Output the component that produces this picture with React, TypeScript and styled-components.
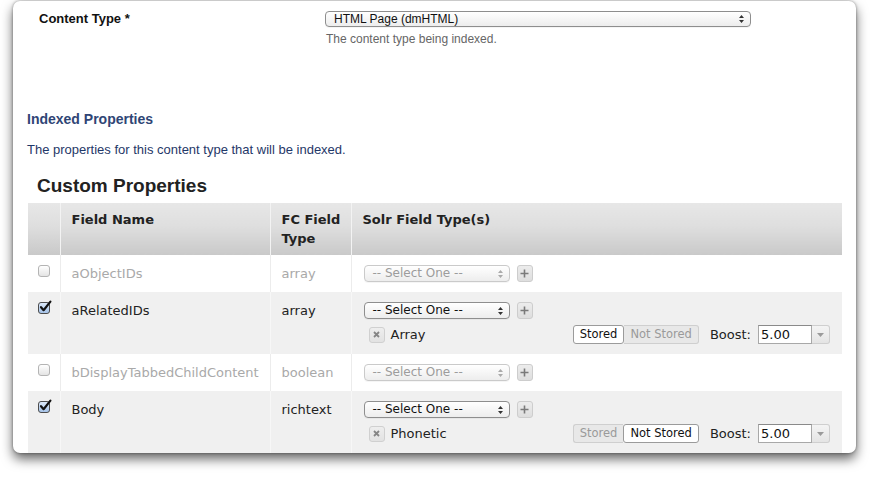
import React from "react";
import styled, { createGlobalStyle } from "styled-components";

const Global = createGlobalStyle`
  html, body { margin: 0; padding: 0; background: #fff; }
  body {
    width: 870px; height: 477px; overflow: hidden;
    font-family: "Liberation Sans", Arial, sans-serif;
  }
`;

const Window = styled.div`
  margin: 1px 0 0 13px;
  width: 843px;
  height: 452px;
  box-sizing: border-box;
  border-radius: 7px;
  background: #fff;
  overflow: hidden;
  box-shadow: 0 6px 12px rgba(0, 0, 0, 0.6), 0 0 3px rgba(0, 0, 0, 0.4);
  padding: 10px 0 0 14px;
`;

const FieldRow = styled.div`
  display: grid;
  grid-template-columns: 298px 426px;
`;

const FieldLabel = styled.div`
  padding-left: 12px;
  font: bold 13px/16px "Liberation Sans", Arial, sans-serif;
  color: #111;
`;

const FieldControl = styled.div`
  display: flex;
  flex-direction: column;
  gap: 4px;
`;

const Help = styled.div`
  font: 12px/16px "Liberation Sans", Arial, sans-serif;
  color: #666;
  padding-left: 1px;
`;

const SectionTitle = styled.h3`
  margin: 64px 0 0;
  font: bold 14px/16px "Liberation Sans", Arial, sans-serif;
  color: #2f4575;
`;

const SectionText = styled.p`
  margin: 15px 0 0;
  font: 13px/16px "Liberation Sans", Arial, sans-serif;
  color: #1f3868;
`;

const TableTitle = styled.h2`
  margin: 17px 0 0;
  padding-left: 10px;
  font: bold 19px/22px "Liberation Sans", Arial, sans-serif;
  color: #222;
`;

const Table = styled.table`
  margin: 6px 0 0 1px;
  width: 814px;
  table-layout: fixed;
  border-collapse: collapse;
  font-family: "DejaVu Sans", Verdana, sans-serif;
`;

const HeadCell = styled.th<{ $w: number; $first?: boolean }>`
  width: ${(p) => p.$w}px;
  box-sizing: border-box;
  padding: 7px 11px 7px;
  text-align: left;
  vertical-align: top;
  white-space: nowrap;
  font: bold 13px/19px "DejaVu Sans", Verdana, sans-serif;
  color: #222;
  background: linear-gradient(#e7e7e7, #dedede 45%, #c9c9c9);
  border-left: ${(p) => (p.$first ? "none" : "1px solid #f3f3f3")};
`;

const Row = styled.tr<{ $alt?: boolean }>`
  background: ${(p) => (p.$alt ? "#f0f0f0" : "#fff")};
`;

const Cell = styled.td<{ $first?: boolean; $muted?: boolean; $alt?: boolean }>`
  padding: ${(p) => (p.$first ? "10px 10px" : "10px 11px")};
  vertical-align: top;
  font-size: 13px;
  line-height: 17px;
  color: ${(p) => (p.$muted ? "#a9a9a9" : "#222")};
  border-left: ${(p) =>
    p.$first ? "none" : p.$alt ? "1px solid #f7f7f7" : "1px solid #ececec"};
  white-space: nowrap;
`;

const SolrCell = styled(Cell)`
  padding: 10px 12px;
`;

const Check = styled.span<{ $on?: boolean }>`
  position: relative;
  display: block;
  width: 12px;
  height: 12px;
  box-sizing: border-box;
  border-radius: 3px;
  border: 1px solid ${(p) => (p.$on ? "#4d4d4d" : "#b4b4b4")};
  background: ${(p) =>
    p.$on
      ? "linear-gradient(#dbe8f8, #a6c3e8)"
      : "linear-gradient(#ffffff, #e4e4e4)"};
`;

const CheckMark = styled.svg`
  position: absolute;
  left: 0px;
  top: -3px;
`;

const Checkbox = ({ on }: { on?: boolean }) => (
  <Check $on={on}>
    {on && (
      <CheckMark width="13" height="13" viewBox="0 0 13 13">
        <path
          d="M2 7.2 L4.6 10.2 L11.4 1.6"
          fill="none"
          stroke="#111"
          strokeWidth="2.2"
          strokeLinecap="round"
          strokeLinejoin="round"
        />
      </CheckMark>
    )}
  </Check>
);

const SelectBox = styled.div<{ $disabled?: boolean; $w: number; $h: number; $small?: boolean }>`
  display: inline-flex;
  align-items: center;
  justify-content: space-between;
  box-sizing: border-box;
  width: ${(p) => p.$w}px;
  height: ${(p) => p.$h}px;
  border: 1px solid ${(p) => (p.$disabled ? "#cacaca" : "#8e8e8e")};
  border-radius: 4px;
  background: linear-gradient(#ffffff, #ededed);
  color: ${(p) => (p.$disabled ? "#9c9c9c" : "#111")};
  padding: 0 6px 0 8px;
  font: ${(p) =>
    p.$small
      ? '12px/14px "Liberation Sans", Arial, sans-serif'
      : '12px/15px "DejaVu Sans", Verdana, sans-serif'};
  box-shadow: 0 1px 0 rgba(0, 0, 0, 0.04);
`;

const Arrows = ({ color }: { color: string }) => (
  <svg width="5" height="8" viewBox="0 0 5 8">
    <path d="M2.5 0 L5 3 L0 3 Z M0 5 L5 5 L2.5 8 Z" fill={color} />
  </svg>
);

const Select = ({
  label,
  w,
  h,
  disabled,
  small,
}: {
  label: string;
  w: number;
  h: number;
  disabled?: boolean;
  small?: boolean;
}) => (
  <SelectBox $w={w} $h={h} $disabled={disabled} $small={small}>
    <span>{label}</span>
    <Arrows color={disabled ? "#aaa" : "#333"} />
  </SelectBox>
);

const Line = styled.div`
  display: flex;
  align-items: center;
`;

const TagLine = styled(Line)`
  margin-top: 6px;
  height: 19px;
`;

const PlusButton = styled.span`
  display: inline-flex;
  align-items: center;
  justify-content: center;
  margin-left: 7px;
  width: 16px;
  height: 17px;
  box-sizing: border-box;
  border: 1px solid #cdcdcd;
  border-radius: 3px;
  background: linear-gradient(#ececec, #dedede);
`;

const Tag = styled.span`
  display: inline-flex;
  align-items: center;
  gap: 6px;
  margin-left: 5px;
  font-size: 13px;
  color: #222;
`;

const RemoveButton = styled.span`
  display: inline-flex;
  align-items: center;
  justify-content: center;
  width: 16px;
  height: 16px;
  box-sizing: border-box;
  border: 1px solid #d0d0d0;
  border-radius: 3px;
  background: linear-gradient(#eeeeee, #e2e2e2);
`;

const Options = styled.div`
  margin-left: auto;
  display: flex;
  align-items: center;
`;

const Toggle = styled.div`
  display: inline-flex;
  height: 19px;
  margin-right: 11px;
`;

const Seg = styled.span<{ $on?: boolean; $pos: "l" | "r" }>`
  box-sizing: border-box;
  height: 19px;
  padding: 0 6px;
  font: 11.5px/17px "DejaVu Sans", Verdana, sans-serif;
  color: ${(p) => (p.$on ? "#111" : "#9a9a9a")};
  background: ${(p) => (p.$on ? "#fff" : "#e8e8e8")};
  border: 1px solid ${(p) => (p.$on ? "#9b9b9b" : "#cfcfcf")};
  ${(p) =>
    p.$on
      ? "border-radius: 3px;"
      : p.$pos === "l"
      ? "border-radius: 3px 0 0 3px; border-right: none;"
      : "border-radius: 0 3px 3px 0; border-left: none;"}
`;

const BoostLabel = styled.span`
  font-size: 13px;
  color: #222;
  margin-right: 7px;
`;

const BoostInput = styled.span`
  box-sizing: border-box;
  width: 54px;
  height: 19px;
  padding-left: 2px;
  border: 1px solid #a8a8a8;
  border-top-color: #8a8a8a;
  background: #fff;
  font: 13px/17px "DejaVu Sans", Verdana, sans-serif;
  color: #111;
`;

const BoostButton = styled.span`
  display: inline-flex;
  align-items: center;
  justify-content: center;
  box-sizing: border-box;
  width: 18px;
  height: 19px;
  border: 1px solid #cfcfcf;
  border-left: none;
  border-radius: 0 3px 3px 0;
  background: linear-gradient(#f4f4f4, #e4e4e4);
`;

type Prop = {
  name: string;
  type: string;
  on: boolean;
  tag?: string;
  stored?: boolean;
};

const props: Prop[] = [
  { name: "aObjectIDs", type: "array", on: false },
  { name: "aRelatedIDs", type: "array", on: true, tag: "Array", stored: true },
  { name: "bDisplayTabbedChildContent", type: "boolean", on: false },
  { name: "Body", type: "richtext", on: true, tag: "Phonetic", stored: false },
];

export default function App() {
  return (
    <>
      <Global />
      <Window>
        <FieldRow>
          <FieldLabel>Content Type *</FieldLabel>
          <FieldControl>
            <Select label="HTML Page (dmHTML)" w={426} h={16} small />
            <Help>The content type being indexed.</Help>
          </FieldControl>
        </FieldRow>

        <SectionTitle>Indexed Properties</SectionTitle>
        <SectionText>The properties for this content type that will be indexed.</SectionText>

        <TableTitle>Custom Properties</TableTitle>
        <Table>
          <thead>
            <tr>
              <HeadCell $w={32} $first />
              <HeadCell $w={210}>Field Name</HeadCell>
              <HeadCell $w={81}>
                FC Field
                <br />
                Type
              </HeadCell>
              <HeadCell $w={491}>Solr Field Type(s)</HeadCell>
            </tr>
          </thead>
          <tbody>
            {props.map((p, i) => {
              const alt = i % 2 === 1;
              return (
                <Row key={p.name} $alt={alt}>
                  <Cell $first $alt={alt}>
                    <Checkbox on={p.on} />
                  </Cell>
                  <Cell $muted={!p.on} $alt={alt}>
                    {p.name}
                  </Cell>
                  <Cell $muted={!p.on} $alt={alt}>
                    {p.type}
                  </Cell>
                  <SolrCell $alt={alt}>
                    <Line>
                      <Select label="-- Select One --" w={146} h={17} disabled={!p.on} />
                      <PlusButton>
                        <svg width="9" height="9" viewBox="0 0 9 9">
                          <path d="M4.5 0.5 V8.5 M0.5 4.5 H8.5" stroke="#7a7a7a" strokeWidth="1.6" />
                        </svg>
                      </PlusButton>
                    </Line>
                    {p.tag && (
                      <TagLine>
                        <Tag>
                          <RemoveButton>
                            <svg width="7" height="7" viewBox="0 0 7 7">
                              <path d="M1 1 L6 6 M6 1 L1 6" stroke="#858585" strokeWidth="1.8" />
                            </svg>
                          </RemoveButton>
                          {p.tag}
                        </Tag>
                        <Options>
                          <Toggle>
                            <Seg $pos="l" $on={p.stored}>Stored</Seg>
                            <Seg $pos="r" $on={!p.stored}>Not Stored</Seg>
                          </Toggle>
                          <BoostLabel>Boost:</BoostLabel>
                          <BoostInput>5.00</BoostInput>
                          <BoostButton>
                            <svg width="7" height="4" viewBox="0 0 7 4">
                              <path d="M0 0 H7 L3.5 4 Z" fill="#9a9a9a" />
                            </svg>
                          </BoostButton>
                        </Options>
                      </TagLine>
                    )}
                  </SolrCell>
                </Row>
              );
            })}
          </tbody>
        </Table>
      </Window>
    </>
  );
}
